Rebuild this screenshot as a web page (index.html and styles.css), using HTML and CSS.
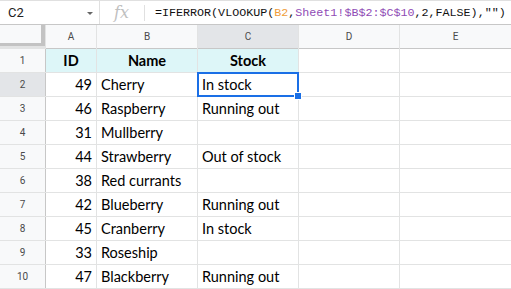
FILE: index.html
```html
<!DOCTYPE html>
<html>
<head>
    <meta charset="utf-8">
    <title>Sheet</title>
    <link rel="stylesheet" href="styles.css">
</head>
<body>
    <div class="formula-bar">
        <div class="name-box">
            <span>C2</span>
            <span class="caret"></span>
        </div>
        <div class="fx">fx</div>
        <div class="formula">=IFERROR(VLOOKUP(<span class="ref1">B2</span>,<span class="ref2">Sheet1!$B$2:$C$10</span>,2,FALSE),"")</div>
    </div>

    <div class="grid">
        <div class="corner"></div>
        <div class="ch">A</div>
        <div class="ch">B</div>
        <div class="ch active">C</div>
        <div class="ch">D</div>
        <div class="ch">E</div>

        <div class="rh">1</div>
        <div class="cell head">ID</div>
        <div class="cell head">Name</div>
        <div class="cell head">Stock</div>
        <div class="cell"></div>
        <div class="cell"></div>

        <div class="rh active">2</div>
        <div class="cell num">49</div>
        <div class="cell">Cherry</div>
        <div class="cell sel">In stock</div>
        <div class="cell"></div>
        <div class="cell"></div>

        <div class="rh">3</div>
        <div class="cell num">46</div>
        <div class="cell">Raspberry</div>
        <div class="cell">Running out</div>
        <div class="cell"></div>
        <div class="cell"></div>

        <div class="rh">4</div>
        <div class="cell num">31</div>
        <div class="cell">Mullberry</div>
        <div class="cell"></div>
        <div class="cell"></div>
        <div class="cell"></div>

        <div class="rh">5</div>
        <div class="cell num">44</div>
        <div class="cell">Strawberry</div>
        <div class="cell">Out of stock</div>
        <div class="cell"></div>
        <div class="cell"></div>

        <div class="rh">6</div>
        <div class="cell num">38</div>
        <div class="cell">Red currants</div>
        <div class="cell"></div>
        <div class="cell"></div>
        <div class="cell"></div>

        <div class="rh">7</div>
        <div class="cell num">42</div>
        <div class="cell">Blueberry</div>
        <div class="cell">Running out</div>
        <div class="cell"></div>
        <div class="cell"></div>

        <div class="rh">8</div>
        <div class="cell num">45</div>
        <div class="cell">Cranberry</div>
        <div class="cell">In stock</div>
        <div class="cell"></div>
        <div class="cell"></div>

        <div class="rh">9</div>
        <div class="cell num">33</div>
        <div class="cell">Roseship</div>
        <div class="cell"></div>
        <div class="cell"></div>
        <div class="cell"></div>

        <div class="rh">10</div>
        <div class="cell num">47</div>
        <div class="cell">Blackberry</div>
        <div class="cell">Running out</div>
        <div class="cell"></div>
        <div class="cell"></div>
    </div>
</body>
</html>
```

FILE: styles.css
```css
body {
	margin: 0;
	background: #fff;
	font-family: Lato, "Liberation Sans", sans-serif;
	overflow: hidden;
}

/* formula bar */
.formula-bar {
	height: 23px;
	border-top: 1px solid #e0e0e0;
	border-bottom: 1px solid #c7c7c7;
	display: flex;
	align-items: center;
}

.name-box {
	width: 100px;
	height: 100%;
	box-sizing: border-box;
	padding: 0 6px 0 8px;
	border-right: 1px solid #e0e0e0;
	display: flex;
	align-items: center;
	justify-content: space-between;
	font-family: Roboto, sans-serif;
	font-size: 13px;
	color: #222;
}

.caret {
	width: 0;
	height: 0;
	border-left: 3px solid transparent;
	border-right: 3px solid transparent;
	border-top: 3px solid #666;
	margin-top: 2px;
}

.fx {
	width: 45px;
	height: 16px;
	line-height: 16px;
	box-sizing: border-box;
	padding-left: 14px;
	border-right: 1px solid #e0e0e0;
	font-family: "DejaVu Serif", serif;
	font-style: italic;
	font-size: 16px;
	color: #c0c0c0;
}

.formula {
	padding-left: 10px;
	font-family: "Liberation Mono", monospace;
	font-size: 11.7px;
	color: #111;
	white-space: nowrap;
}

.ref1 {
	color: #f09d3a;
}

.ref2 {
	color: #8f4bb5;
}

/* sheet */
.grid {
	display: grid;
	grid-template-columns: 45px 50px 100px 100px 100px 1fr;
	grid-auto-rows: 23px;
	gap: 1px;
	padding-bottom: 1px;
	background: #e2e3e3;
}

.corner {
	background: #f8f9fa;
	border-right: 4px solid #c3c3c3;
	border-bottom: 3px solid #c3c3c3;
	margin-bottom: 2px;
}

.ch, .rh {
	background: #f8f9fa;
	color: #4a4a4a;
	font-family: Roboto, sans-serif;
	display: flex;
	align-items: center;
	justify-content: center;
}

.ch {
	font-size: 10px;
	box-shadow: 0 1px 0 #c7c7c7;
}

.rh {
	font-size: 10px;
	box-shadow: 1px 0 0 #c7c7c7;
}

.active {
	background: #e3e5e8;
}

.cell {
	background: #fff;
	font-size: 14.5px;
	color: #000;
	padding: 0 4px;
	display: flex;
	align-items: center;
	white-space: nowrap;
}

.head {
	background: #ddf6f8;
	font-weight: bold;
	justify-content: center;
}

.num {
	justify-content: flex-end;
}

.sel {
	position: relative;
	z-index: 2;
}

.sel::after {
	content: "";
	position: absolute;
	top: -1px;
	left: -1px;
	right: -1px;
	bottom: -1px;
	border: 2px solid #1a6fe6;
}

.sel::before {
	content: "";
	position: absolute;
	right: -4px;
	bottom: -4px;
	width: 6px;
	height: 6px;
	background: #1a6fe6;
	border: 1px solid #fff;
	z-index: 3;
}
```
